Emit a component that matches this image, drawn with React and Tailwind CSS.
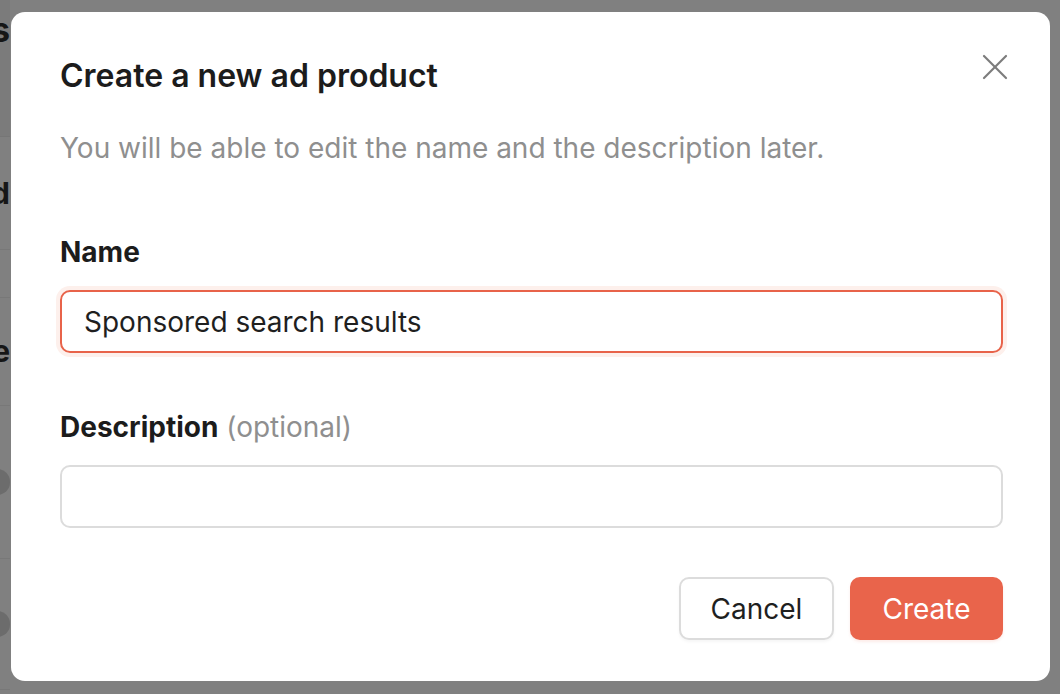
import React, { useState } from 'react';

const font = { fontFamily: 'Inter, "Noto Sans", sans-serif' };

const CloseIcon = () => (
  <svg width="26" height="26" viewBox="0 0 26 26" fill="none" stroke="#7c7c7c" strokeWidth="2.2" strokeLinecap="round">
    <path d="M2 2 L24 24" />
    <path d="M24 2 L2 24" />
  </svg>
);

const App = () => {
  const [name, setName] = useState('Sponsored search results');
  const [description, setDescription] = useState('');

  return (
    <div className="relative w-[1060px] h-[694px] overflow-hidden bg-[#808080]" style={font}>
      {/* Page behind the overlay, only the left edge shows */}
      <div className="flex flex-col w-[10px] overflow-hidden text-[#161616] font-bold">
        <div className="h-[137px] bg-[#7b7b7b] border-b border-[#767676] flex items-start justify-end pt-[12px] text-[34px] leading-[36px]">
          <span>s</span>
        </div>
        <div className="h-[113px] border-b border-[#787878] flex items-center justify-end text-[30px]">
          <span>d</span>
        </div>
        <div className="h-[48px] border-b border-[#787878]" />
        <div className="h-[108px] border-b border-[#787878] flex items-center justify-end text-[30px]">
          <span>e</span>
        </div>
        <div className="h-[153px] border-b border-[#787878] flex items-center">
          <div className="w-[26px] h-[26px] -ml-[15px] rounded-full bg-[#6c6c6c]" />
        </div>
        <div className="h-[131px] border-b border-[#787878] flex items-center">
          <div className="w-[26px] h-[26px] -ml-[15px] rounded-full bg-[#6c6c6c]" />
        </div>
      </div>

      {/* Dialog */}
      <div className="absolute left-[11px] top-[12px] w-[1039px] h-[669px] bg-white rounded-[14px] pl-[49px] pr-[47px] pt-[46px]">
        <button type="button" className="absolute right-[42px] top-[42px]" aria-label="Close">
          <CloseIcon />
        </button>

        <h2 className="text-[32px] leading-[36px] font-semibold text-[#1c1c1c]">Create a new ad product</h2>
        <p className="mt-[36px] text-[28px] leading-[36px] text-[#8f8f8f]">
          You will be able to edit the name and the description later.
        </p>

        <label className="block mt-[68px] text-[28px] leading-[36px] font-bold text-[#1c1c1c]">Name</label>
        <input
          value={name}
          onChange={(e) => setName(e.target.value)}
          className="mt-[20px] w-full h-[63px] px-[22px] rounded-[10px] border-2 border-[#e8634a] ring-4 ring-[#fdf0ec] outline-none text-[28px] text-[#1f1f1f]"
          style={font}
        />

        <label className="block mt-[56px] text-[28px] leading-[36px] text-[#1c1c1c]">
          <span className="font-bold">Description</span>{' '}
          <span className="text-[#8f8f8f]">(optional)</span>
        </label>
        <input
          value={description}
          onChange={(e) => setDescription(e.target.value)}
          className="mt-[20px] w-full h-[63px] px-[22px] rounded-[10px] border-2 border-[#dcdcdc] outline-none text-[28px] text-[#1f1f1f]"
          style={font}
        />

        <div className="mt-[49px] flex justify-end gap-[16px]">
          <button type="button" className="h-[63px] w-[155px] rounded-[10px] border-2 border-[#dcdcdc] bg-white text-[28px] text-[#1f1f1f] shadow-[0_2px_3px_rgba(0,0,0,0.04)]">
            Cancel
          </button>
          <button type="button" className="h-[63px] w-[153px] rounded-[10px] bg-[#e9644b] text-[28px] text-white shadow-[0_2px_3px_rgba(233,100,75,0.12)]">
            Create
          </button>
        </div>
      </div>
    </div>
  );
};

export default App;
